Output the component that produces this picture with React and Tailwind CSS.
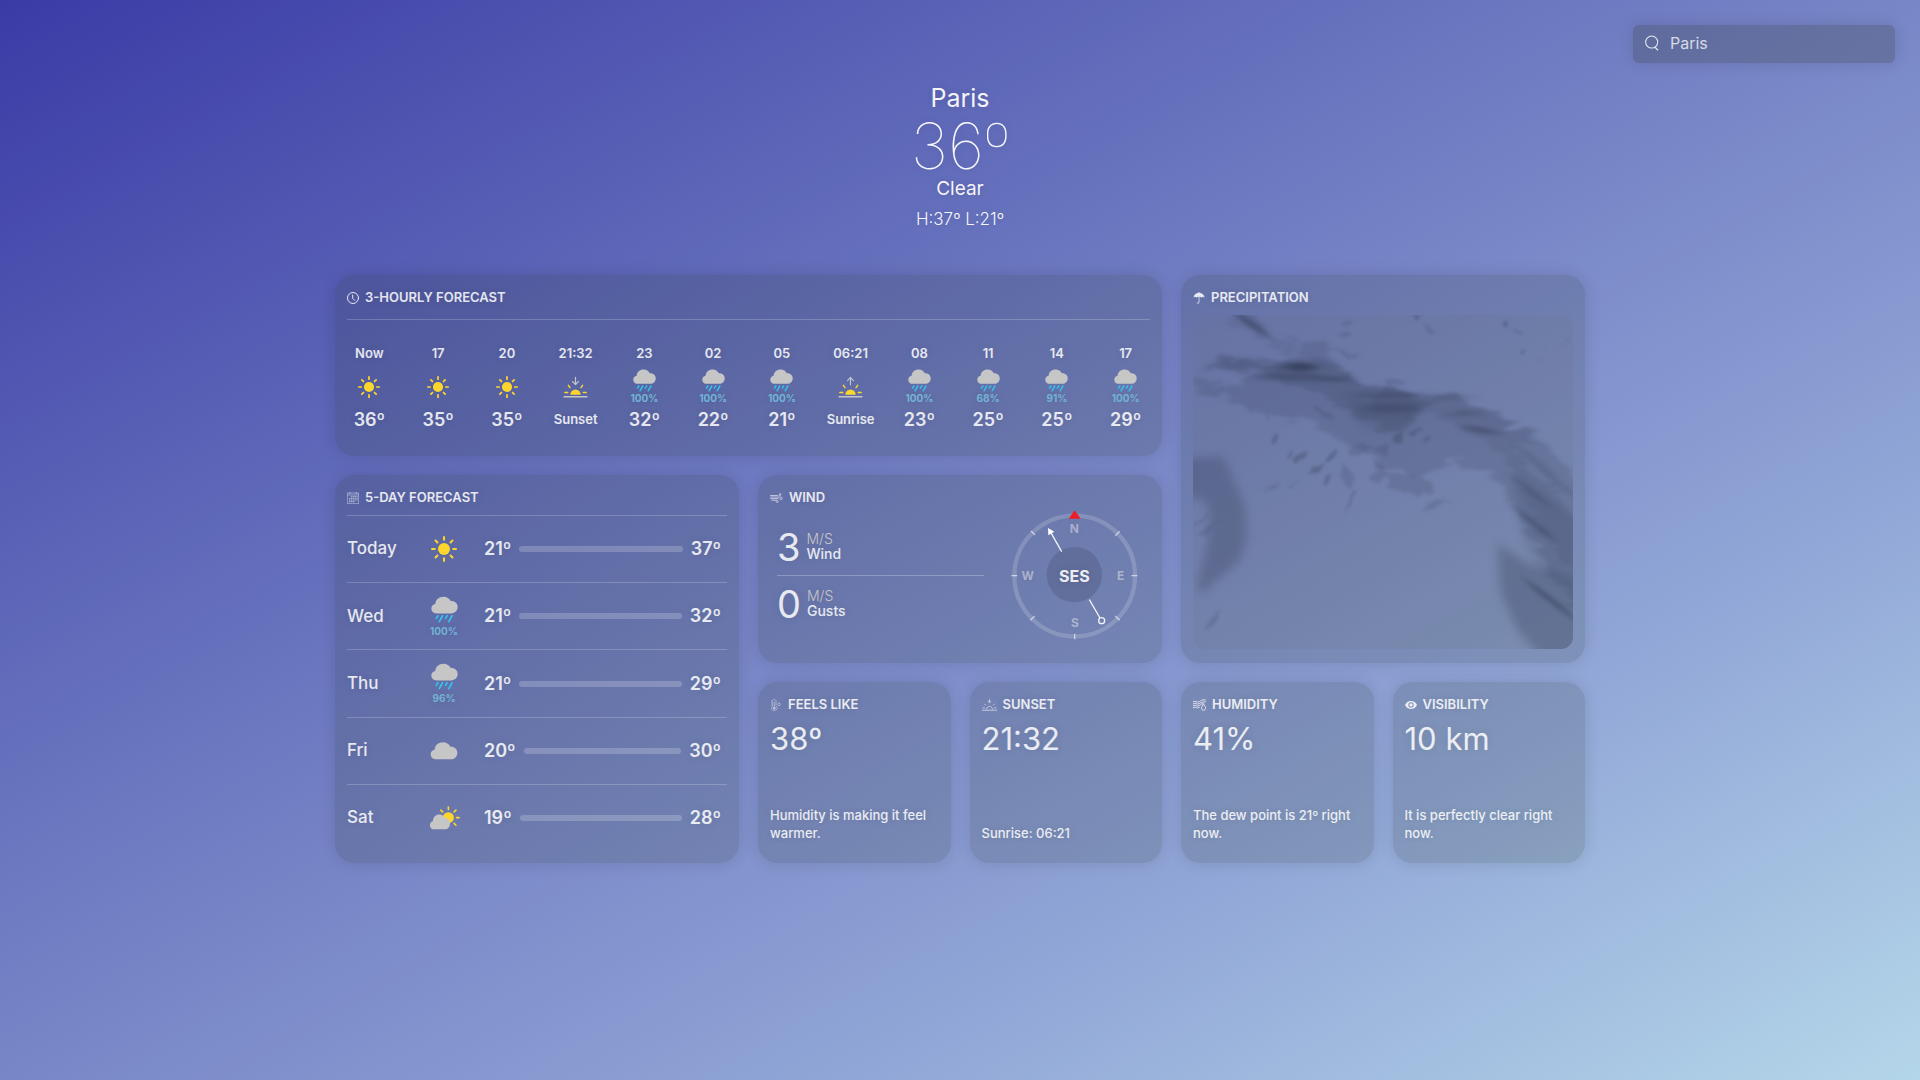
import React from "react";

const sunRays = [0, 45, 90, 135, 180, 225, 270, 315];

function Sun({ className }) {
  return (
    <svg viewBox="-38 -38 76 76" className={className} aria-hidden="true">
      <circle r="17.5" fill="#fcd62d" />
      {sunRays.map((a) => (
        <line key={a} y1="-27" y2="-35" stroke="#fcd62d" strokeWidth="6" strokeLinecap="round" transform={`rotate(${a})`} />
      ))}
    </svg>
  );
}

const cloudPath =
  "M18 52C8 52 1 46 1 37c0-8 5-13 12-14C14 10 24 1 38 1c10 0 18 5 22 13 12-1 21 7 21 18 0 12-8 20-20 20Z";

function Cloud({ className }) {
  return (
    <svg viewBox="0 0 82 54" className={className} aria-hidden="true">
      <path d={cloudPath} fill="#c6c6c6" />
    </svg>
  );
}

function Rain({ className }) {
  return (
    <svg viewBox="0 0 82 80" className={className} aria-hidden="true">
      <path d={cloudPath} fill="#c6c6c6" />
      <g stroke="#35c5f0" strokeWidth="5" strokeLinecap="round">
        <path d="M21 59l-5 8M35 59l-10 18M49 59l-5 8M64 59l-10 18" />
      </g>
    </svg>
  );
}

function PartlyCloudy({ className }) {
  return (
    <svg viewBox="0 0 92 74" className={className} aria-hidden="true">
      <g transform="translate(58 36)">
        <circle r="17" fill="#fcd62d" />
        {[-45, 0, 45, 90, 135].map((a) => (
          <line key={a} y1="-25" y2="-33" stroke="#fcd62d" strokeWidth="5" strokeLinecap="round" transform={`rotate(${a})`} />
        ))}
      </g>
      <path d="M14 72C6 72 1 66 1 59c0-6 4-11 9-12C11 34 19 26 30 26c9 0 14 4 17 11 10 0 16 7 16 17 0 11-7 18-16 18Z" fill="#c6c6c6" />
    </svg>
  );
}

function Horizon({ up, className }) {
  return (
    <svg viewBox="0 0 76 68" className={className} aria-hidden="true">
      <g stroke="#c6c6c6" strokeWidth="3.5" fill="none" strokeLinecap="round" strokeLinejoin="round">
        {up ? <path d="M38 27V5M29 14l9-10 9 10" /> : <path d="M38 4v22M29 17l9 10 9-10" />}
        <path d="M3 64h70" strokeWidth="5" />
      </g>
      <path d="M22 58a16 16 0 1 1 32 0Z" fill="#fcd62d" />
      <path d="M5 51h9M62 51h9M16 29l5 7M60 29l-5 7" stroke="#fcd62d" strokeWidth="4.5" strokeLinecap="round" />
    </svg>
  );
}

function ClockIcon() {
  return (
    <svg viewBox="0 0 36 36" className="size-3" fill="none" stroke="currentColor" strokeWidth="3" strokeLinecap="round" aria-hidden="true">
      <circle cx="18" cy="18" r="16.5" />
      <path d="M17 9v10l6 6" />
    </svg>
  );
}

function CalendarIcon() {
  return (
    <svg viewBox="0 0 36 36" className="size-3 opacity-70" fill="none" stroke="currentColor" strokeWidth="2" aria-hidden="true">
      <path d="M1 3h34v32H1ZM1 9h34M8 0v6M28 0v6" />
      <path d="M12 14h20M6 19h26M6 24h26M6 29h18" strokeWidth="3" strokeDasharray="4 1.5" />
    </svg>
  );
}

function WindIcon() {
  return (
    <svg viewBox="0 0 40 32" className="h-[10px] w-[13px]" fill="none" stroke="currentColor" strokeWidth="2.2" strokeLinecap="round" aria-hidden="true">
      <path d="M1 8h22M28 4c2-4 8-2 6 2-1 2-3 2-5 2M1 13h33c5 0 6 9 0 8-2 0-3-1-3-3M1 18h24M5 23h16c6 0 6 8 1 7-2 0-3-1-3-3" />
    </svg>
  );
}

function UmbrellaIcon() {
  return (
    <svg viewBox="0 0 32 32" className="size-3" aria-hidden="true">
      <path d="M1 15C2 7 8 3 15 2V0h2v2c7 1 13 5 14 13-3-3-6-3-8 0-2-2-4-3-6-2v14c0 5-7 5-7 0h2c0 3 3 3 3 0V13c-2-1-4 0-6 2-2-3-5-3-8 0Z" fill="currentColor" />
    </svg>
  );
}

function ThermometerIcon() {
  return (
    <svg viewBox="0 0 32 36" className="h-3 w-3 opacity-70" fill="none" stroke="currentColor" strokeWidth="2" aria-hidden="true">
      <path d="M6 22V6c0-6 10-6 10 0v16c7 5 2 13-5 13s-12-8-5-13Z" />
      <circle cx="11" cy="28" r="3" fill="currentColor" />
      <path d="M11 28V9M1 6h3M1 12h3M1 18h3" />
      <circle cx="25" cy="16" r="4" />
    </svg>
  );
}

function SunsetIcon() {
  return (
    <svg viewBox="0 0 46 36" className="h-3 w-[15px] opacity-80" fill="none" stroke="currentColor" strokeWidth="2.6" aria-hidden="true">
      <path d="M0 34h46M14 32c0-13 18-13 18 0M2 27h7M37 27h7M7 14l5 5M39 14l-5 5M23 0v10M18 6l5 5 5-5" />
    </svg>
  );
}

function HumidityIcon() {
  return (
    <svg viewBox="0 0 40 36" className="h-3 w-[13px]" fill="none" stroke="currentColor" strokeWidth="2.6" strokeLinecap="round" aria-hidden="true">
      <path d="M1 8c7-5 11 4 18 0s6-6 19-6M1 14c7-5 11 4 18 0s8-6 19-6M1 20c7-5 11 4 18 0s6-6 10-6M1 26c7-5 11 4 18 0" />
      <path d="M32 15c4 6 7 9 7 13 0 8-13 8-13 0 0-4 3-7 6-13Z" />
    </svg>
  );
}

function EyeIcon() {
  return (
    <svg viewBox="0 0 36 36" className="size-3" aria-hidden="true">
      <path fillRule="evenodd" d="M0 18C4 10 10 6 18 6s14 4 18 12c-4 8-10 12-18 12S4 26 0 18Zm18-8a8 8 0 1 0 0 16 8 8 0 0 0 0-16Zm0 3a5 5 0 1 1 0 10 5 5 0 0 1 0-10Z" fill="currentColor" />
    </svg>
  );
}

function SearchIcon() {
  return (
    <svg viewBox="0 0 44 50" className="h-4 w-[14px] shrink-0" fill="none" stroke="currentColor" strokeWidth="3.2" aria-hidden="true">
      <circle cx="21" cy="22" r="19" />
      <path d="M31 38l10 10" strokeWidth="4" />
    </svg>
  );
}

function Card({ className = "", children }) {
  return (
    <section className={`flex flex-col rounded-[20px] bg-[rgba(40,50,40,0.16)] shadow-[0_0_16px_rgba(0,0,0,0.12)] ${className}`}>
      {children}
    </section>
  );
}

function CardTitle({ icon, children, className = "h-[46px]" }) {
  return (
    <h2 className={`flex items-center gap-[6px] text-[13px] font-semibold uppercase ${className}`}>
      {icon}
      {children}
    </h2>
  );
}

const hours = [
  { time: "Now", icon: "sun", temp: "36º" },
  { time: "17", icon: "sun", temp: "35º" },
  { time: "20", icon: "sun", temp: "35º" },
  { time: "21:32", icon: "sunset", temp: "Sunset" },
  { time: "23", icon: "rain", pop: "100%", temp: "32º" },
  { time: "02", icon: "rain", pop: "100%", temp: "22º" },
  { time: "05", icon: "rain", pop: "100%", temp: "21º" },
  { time: "06:21", icon: "sunrise", temp: "Sunrise" },
  { time: "08", icon: "rain", pop: "100%", temp: "23º" },
  { time: "11", icon: "rain", pop: "68%", temp: "25º" },
  { time: "14", icon: "rain", pop: "91%", temp: "25º" },
  { time: "17", icon: "rain", pop: "100%", temp: "29º" },
];

function HourIcon({ icon, pop }) {
  if (icon === "sun") return <Sun className="size-[22px]" />;
  if (icon === "rain")
    return (
      <>
        <Rain className="size-[23px]" />
        <span className="text-[10px] leading-3 font-bold text-[#72b3d6]">{pop}</span>
      </>
    );
  return <Horizon up={icon === "sunrise"} className="h-[22px] w-[25px]" />;
}

const days = [
  { day: "Today", icon: "sun", low: "21º", high: "37º" },
  { day: "Wed", icon: "rain", pop: "100%", low: "21º", high: "32º" },
  { day: "Thu", icon: "rain", pop: "96%", low: "21º", high: "29º" },
  { day: "Fri", icon: "cloud", low: "20º", high: "30º" },
  { day: "Sat", icon: "partly", low: "19º", high: "28º" },
];

function DayIcon({ icon, pop }) {
  if (icon === "sun") return <Sun className="size-[26px]" />;
  if (icon === "cloud") return <Cloud className="h-[18px] w-7" />;
  if (icon === "partly") return <PartlyCloudy className="h-6 w-[31px]" />;
  return (
    <>
      <Rain className="size-[27px]" />
      <span className="mt-0.5 text-[10px] leading-3 font-bold text-[#72b3d6]">{pop}</span>
    </>
  );
}

function WindRow({ value, label }) {
  return (
    <div className="flex items-center gap-[6px] py-2">
      <span className="text-[38px] leading-10">{value}</span>
      <div className="pb-0.5 text-sm leading-[15px]">
        <div className="font-light text-[#c6c6c6]">M/S</div>
        <div className="font-medium">{label}</div>
      </div>
    </div>
  );
}

function Compass() {
  return (
    <svg viewBox="0 0 450 450" className="size-[150px] shrink-0" role="img" aria-label="Wind direction SES">
      <circle cx="224" cy="228" r="181" fill="none" stroke="#fff" strokeOpacity="0.17" strokeWidth="13" />
      <g stroke="#fff" strokeOpacity="0.6" strokeWidth="4">
        <path d="M34 227h18M394 227h18M224 401v17M93 93l12 12M359 94l-13 13M91 361l13-13M359 361l-13-13" />
      </g>
      <path d="M224 31l18 25h-36Z" fill="#ee1c25" />
      <circle cx="223" cy="224" r="83" fill="#5a6690" fillOpacity="0.65" />
      <g stroke="#fff" strokeOpacity="0.9" strokeWidth="4" fill="none">
        <path d="M185 155l-34-60M268 299l32 55" />
        <circle cx="305" cy="362" r="9" />
      </g>
      <path d="M144 84l1 22 18-11Z" fill="#fff" />
      <g fill="#fff" fillOpacity="0.42" fontSize="36" fontWeight="700" textAnchor="middle">
        <text x="223" y="99">N</text>
        <text x="83" y="240">W</text>
        <text x="362" y="240">E</text>
        <text x="225" y="381">S</text>
      </g>
      <text x="223" y="245" fill="#fff" fillOpacity="0.9" fontSize="48" fontWeight="700" textAnchor="middle">SES</text>
    </svg>
  );
}

function RadarMap() {
  return (
    <svg viewBox="99 165 1137 1001" preserveAspectRatio="none" className="h-[334px] w-full rounded-xl bg-[rgba(110,115,130,0.15)]" role="img" aria-label="Precipitation map">
      <defs>
        <filter id="band" x="-20%" y="-20%" width="140%" height="140%" colorInterpolationFilters="sRGB">
          <feTurbulence type="fractalNoise" baseFrequency="0.012 0.03" numOctaves="4" seed="4" result="n" />
          <feDisplacementMap in="SourceGraphic" in2="n" scale="80" xChannelSelector="R" yChannelSelector="G" />
          <feGaussianBlur stdDeviation="8 5" />
        </filter>
        <filter id="streak" x="-20%" y="-60%" width="140%" height="220%" colorInterpolationFilters="sRGB">
          <feGaussianBlur stdDeviation="22 6" />
        </filter>
        <filter id="haze" x="-30%" y="-30%" width="160%" height="160%" colorInterpolationFilters="sRGB">
          <feGaussianBlur stdDeviation="14" />
        </filter>
        <filter id="fine" x="-30%" y="-30%" width="160%" height="160%" colorInterpolationFilters="sRGB">
          <feTurbulence type="fractalNoise" baseFrequency="0.03" numOctaves="2" seed="9" result="n" />
          <feDisplacementMap in="SourceGraphic" in2="n" scale="22" xChannelSelector="R" yChannelSelector="G" />
          <feGaussianBlur stdDeviation="4" />
        </filter>
      </defs>
      <g filter="url(#band)" fill="#3a4462">
        <path fillOpacity="0.22" d="M215 150l85 20 25 40 60 30 130 20 0 55 60 40 70 25 50 30 160 0 100 25 60 40 80 30 60 40 70 90 70 70 70 90 0 320-60-10-90-90-50-80-50-90-40-80-90-140-90-20-60 20-60 20-70-10-50-40-100-50-100-60-100-20-80-20-60-20-110-20 0-40 170-5 10-30 60-10 90 5 50 10-60-70-70-40Z" />
        <path fillOpacity="0.24" d="M40 320l100 5 50-35 110 15 130-25 90 30 60 45 90 40 100 0 50 25-60 70-80 20-80-30-120-80-150-50-140-20-150-10Z" />
        <path fillOpacity="0.15" d="M240 160l50 30 60 60 90 30-60 10-80-50-90-50ZM640 395l130 0 160 20 80 50 80 50 60 40-100-10-80-50-100-30-130 0-100-30ZM860 460l80 0 60 50 80 80 60 70 80 80 60 90v100l-70-30-80-90-50-120-60-100Z" />
      </g>
      <g filter="url(#haze)" fill="#3a4462">
        <path fillOpacity="0.34" d="M60 595l130-5 30 70 35 80 5 90-20 70-70 60-40 35-20-5 20-90 20-90-5-75-30-25-55 15Z" />
        <path fillOpacity="0.36" d="M1010 850l90 60 160 50v250l-110-10-80-90-50-110Z" />
        <path fillOpacity="0.18" d="M1050 640l100 60 110 80v200l-110-40-60-90Z" />
        <path fillOpacity="0.25" d="M560 420l230 10-30 50-60 30-90-10Z" />
      </g>
      <g filter="url(#streak)" fill="#2a324c">
        <ellipse fillOpacity="0.65" cx="415" cy="320" rx="62" ry="14" />
        <ellipse fillOpacity="0.5" cx="520" cy="357" rx="60" ry="6" />
        <ellipse fillOpacity="0.32" cx="385" cy="350" rx="110" ry="12" />
        <ellipse fillOpacity="0.2" cx="230" cy="310" rx="60" ry="20" />
        <ellipse fillOpacity="0.3" cx="690" cy="405" rx="120" ry="7" />
        <ellipse fillOpacity="0.2" cx="690" cy="445" rx="90" ry="16" />
        <ellipse fillOpacity="0.2" cx="860" cy="412" rx="90" ry="6" />
        <ellipse fillOpacity="0.28" cx="910" cy="460" rx="55" ry="8" />
      </g>
      <g transform="rotate(10 960 510)">
        <ellipse filter="url(#streak)" fill="#2a324c" fillOpacity="0.45" cx="958" cy="510" rx="60" ry="8" />
      </g>
      <g transform="rotate(34 270 190)">
        <ellipse filter="url(#streak)" fill="#2a324c" fillOpacity="0.45" cx="275" cy="190" rx="65" ry="10" />
      </g>
      <g transform="rotate(38 1120 790)" fill="#2a324c" filter="url(#streak)">
        <ellipse fillOpacity="0.32" cx="1120" cy="790" rx="75" ry="9" />
        <ellipse fillOpacity="0.2" cx="1060" cy="720" rx="70" ry="8" />
        <ellipse fillOpacity="0.14" cx="1000" cy="640" rx="80" ry="12" />
        <ellipse fillOpacity="0.14" cx="1110" cy="650" rx="80" ry="10" />
        <ellipse fillOpacity="0.4" cx="1300" cy="940" rx="100" ry="9" />
      </g>
      <g filter="url(#fine)" fill="#2f3854">
        <path fillOpacity="0.3" d="M340 520l10-5-3 34-9 5ZM378 590l12-25 10 5-12 22ZM400 590l40-20-10 24-20 16-12-4ZM495 600l20-32 12-4-10 36-18 14ZM444 652l20-34 28-6-26 30ZM488 672l6-26 16-8-6 28-12 14ZM550 765l34-75 8 4-26 48ZM700 525l36-8-14 26-26 0ZM745 525l30-20 8 6-24 20ZM788 545l14-20 8 4-14 16ZM1024 192l10-12 8 12-8 16ZM1055 206l10 12 24 0-14 10-18-8ZM1076 270l12-4 6 10-14 4ZM755 165h34l-20 18Z" />
        <path fillOpacity="0.17" d="M535 190l30-6 16 8-30 8ZM530 224l30-14 18 18-34 4ZM785 196l24 0 18 24-12 4ZM536 268l66 20-40 10ZM664 356l40-4 34 20-36 4ZM250 432l12 4 20 28-12-6ZM314 458l8 4 6 28-8-4ZM456 430l30 20 44 30-24-2-44-26ZM270 705l50-22 36-16-8 20-44 4ZM386 684l30-26-18 26ZM545 600l14 20 24 30-16 36-20-26ZM560 570l40-25 30 14 60-6-10 40-44-30-40 24-30 0ZM640 600l30 20 20 24-40 30-30-24 26-14ZM690 640l70 6 54 20 0 30-40 14-96-32ZM785 750l30-30 60 6-40 8-42 20ZM130 1112l20-40 34-20-14 34ZM100 790l50-30-20 26-30 14ZM110 825l60-50-30 50ZM1148 270l6-10-4 14ZM1196 262l26-26 6 4ZM1130 296l8-4-4 10Z" />
      </g>
    </svg>
  );
}

function Stat({ icon, title, value, note }) {
  return (
    <Card className="min-h-[181px] px-3 pb-[21px]">
      <CardTitle icon={icon}>{title}</CardTitle>
      <p className="text-[31px] leading-[22px]">{value}</p>
      <p className="mt-auto text-[13px] leading-[18px] font-medium">{note}</p>
    </Card>
  );
}

export default function App() {
  return (
    <div className="min-h-screen bg-[linear-gradient(to_bottom_right,#3b3ba6_0%,#5f69b9_30%,#7886c7_50%,#93a9d8_74%,#b4d6e9_100%)] pb-8 font-['Inter','Liberation_Sans',sans-serif] text-white/85 [text-shadow:0_0_8px_rgba(0,0,0,0.12)]">
      <header className="flex flex-col px-[25px] pt-[25px]">
        <label className="flex h-[38px] w-[262px] items-center gap-[11px] self-end rounded-md bg-[rgba(40,50,40,0.24)] px-3 pb-0.5 shadow-[0_0_16px_rgba(0,0,0,0.12)]">
          <SearchIcon />
          <input type="text" aria-label="Search city" defaultValue="Paris" className="w-full bg-transparent text-base text-white/75 outline-none" />
        </label>
        <div className="mt-[18px] flex flex-col items-center text-white/95">
          <h1 className="text-[25px] leading-[34px]">Paris</h1>
          <p className="text-[64px] leading-[62px] font-thin">36º</p>
          <p className="mt-px text-[19px] leading-[22px]">Clear</p>
          <p className="mt-2 text-[17px] leading-[22px] font-light">H:37º L:21º</p>
        </div>
      </header>

      <main className="mx-auto mt-[45px] grid w-full max-w-[1250px] grid-cols-6 gap-[19px]">
        <Card className="col-span-4 pb-6">
          <div className="px-3">
            <CardTitle icon={<ClockIcon />} className="h-[45px] border-b border-white/20 pt-0.5">3-Hourly Forecast</CardTitle>
          </div>
          <ol className="grid grid-cols-12 pt-5 pr-0.5">
            {hours.map((h, i) => (
              <li key={i} className="flex flex-col items-center">
                <span className="text-[13px] leading-[26px] font-semibold">{h.time}</span>
                <div className="flex h-[41px] flex-col items-center justify-center">
                  <HourIcon icon={h.icon} pop={h.pop} />
                </div>
                <span className={h.temp.length > 3 ? "text-[13px] leading-[25px] font-semibold" : "text-lg leading-[25px] font-semibold"}>{h.temp}</span>
              </li>
            ))}
          </ol>
        </Card>

        <Card className="col-span-2 row-span-2 px-3 pb-3">
          <CardTitle icon={<UmbrellaIcon />} className="-mb-[6px] h-[46px]">Precipitation</CardTitle>
          <RadarMap />
        </Card>

        <Card className="col-span-2 row-span-2 px-3 pb-3">
          <CardTitle icon={<CalendarIcon />} className="-mb-[6px] h-[46px]">5-Day Forecast</CardTitle>
          <ul className="flex flex-1 flex-col">
            {days.map((d) => (
              <li key={d.day} className="grid min-h-[67px] flex-1 grid-cols-[72px_50px_1fr] items-center border-t border-white/20 pr-[6px]">
                <span className="text-[17px] font-medium">{d.day}</span>
                <div className="flex flex-col items-center">
                  <DayIcon icon={d.icon} pop={d.pop} />
                </div>
                <div className="flex items-center gap-2 pl-[15px] text-lg font-semibold">
                  <span>{d.low}</span>
                  <span className="h-[6px] flex-1 rounded-full bg-white/20" />
                  <span>{d.high}</span>
                </div>
              </li>
            ))}
          </ul>
        </Card>

        <Card className="col-span-2 h-[188px] px-3">
          <CardTitle icon={<WindIcon />}>Wind</CardTitle>
          <div className="-mt-[21px] flex items-center justify-between">
            <div className="ml-[7px] flex-1 divide-y divide-white/25 pr-4">
              <WindRow value="3" label="Wind" />
              <WindRow value="0" label="Gusts" />
            </div>
            <Compass />
          </div>
        </Card>

        <Stat icon={<ThermometerIcon />} title="Feels like" value="38º" note="Humidity is making it feel warmer." />
        <Stat icon={<SunsetIcon />} title="Sunset" value="21:32" note="Sunrise: 06:21" />
        <Stat icon={<HumidityIcon />} title="Humidity" value="41%" note="The dew point is 21º right now." />
        <Stat icon={<EyeIcon />} title="Visibility" value="10 km" note="It is perfectly clear right now." />
      </main>
    </div>
  );
}
